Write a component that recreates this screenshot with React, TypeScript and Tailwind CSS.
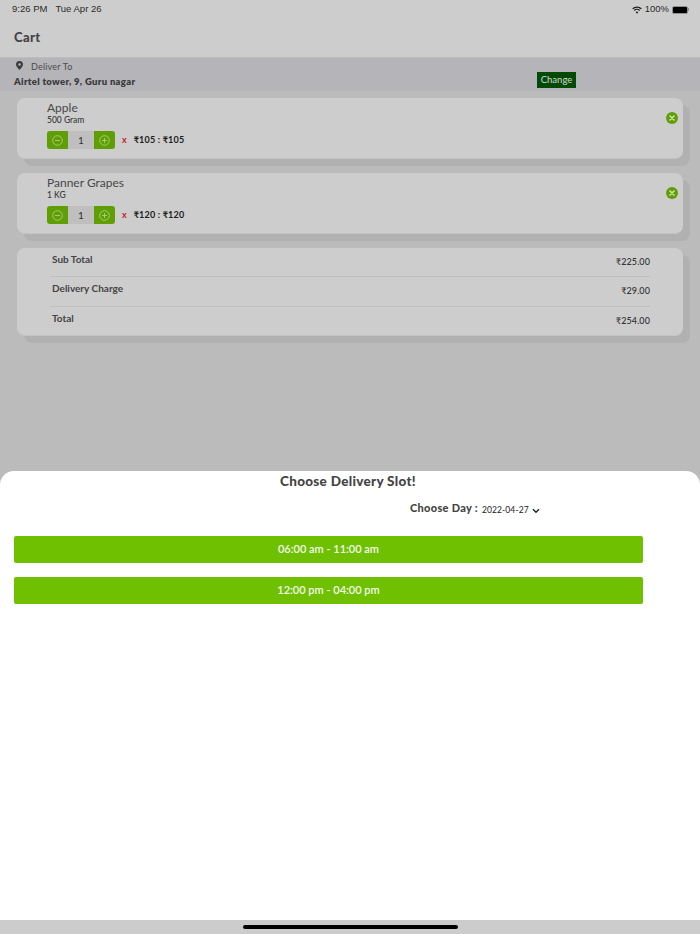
import React from 'react'

const cartItems = [
  { name: 'Apple', unit: '500 Gram', price: '₹105', total: '₹105' },
  { name: 'Panner Grapes', unit: '1 KG', price: '₹120', total: '₹120' },
]

const totals = [
  { label: 'Sub Total', value: '₹225.00' },
  { label: 'Delivery Charge', value: '₹29.00' },
  { label: 'Total', value: '₹254.00' },
]

const slots = ['06:00 am - 11:00 am', '12:00 pm - 04:00 pm']

const StepIcon = ({ plus }: { plus?: boolean }) => (
  <svg width="11" height="11" viewBox="0 0 11 11" fill="none" stroke="#a9cf80" strokeWidth="0.9">
    <circle cx="5.5" cy="5.5" r="4.8" />
    <path d={plus ? 'M3 5.5h5M5.5 3v5' : 'M3 5.5h5'} />
  </svg>
)

const RemoveIcon = () => (
  <svg width="12" height="12" viewBox="0 0 12 12" className="shrink-0">
    <circle cx="6" cy="6" r="6" fill="#5f9f05" />
    <path d="M4 4l4 4M8 4l-4 4" stroke="#d5e6bf" strokeWidth="1.5" strokeLinecap="round" />
  </svg>
)

const StatusBar = () => (
  <div className="flex h-[17px] items-center justify-between pl-3 pr-[11px] pt-0.5 text-[9.5px] text-[#2b2b2b] font-['Liberation_Sans',sans-serif]">
    <div className="flex gap-2">
      <span>9:26 PM</span>
      <span>Tue Apr 26</span>
    </div>
    <div className="flex items-center gap-[3px]">
      <svg width="10" height="8" viewBox="0 0 10 8" fill="none" stroke="#222" strokeWidth="1.2">
        <path d="M0.6 2.8a6.4 6.4 0 0 1 8.8 0M2.2 4.5a4 4 0 0 1 5.6 0" />
        <path d="M5 7.8L3.6 6.1a2 2 0 0 1 2.8 0z" fill="#222" stroke="none" />
      </svg>
      <span>100%</span>
      <div className="flex items-center">
        <div className="h-[8px] w-[16px] rounded-[2px] border border-[#8f8f8f] bg-black" />
        <div className="h-[3px] w-px bg-[#8f8f8f]" />
      </div>
    </div>
  </div>
)

const CartCard = ({ item }: { item: (typeof cartItems)[number] }) => (
  <div className="flex h-[61px] items-start justify-between rounded-lg border-b border-[#c4c4c4] bg-[#cdcdcd] pl-[30px] pr-[5px] shadow-[7px_7px_0_#b1b1b1]">
    <div>
      <div className="mt-[3px] text-[12px] leading-[14px] text-[#484848]">{item.name}</div>
      <div className="text-[8.5px] leading-[11px] font-medium text-[#3a3a3a]">{item.unit}</div>
      <div className="mt-[5px] flex items-center">
        <div className="flex h-[18px] w-[68px] items-center overflow-hidden rounded-[3px] bg-[#bfbfbf] text-[10px] text-[#333]">
          <div className="flex h-full w-[21px] items-center justify-center bg-[#5f9f05]">
            <StepIcon />
          </div>
          <div className="flex-1 text-center">1</div>
          <div className="flex h-full w-[21px] items-center justify-center bg-[#5f9f05]">
            <StepIcon plus />
          </div>
        </div>
        <span className="ml-[7px] text-[9px] font-bold text-[#c81e1e]">x</span>
        <span className="ml-[7px] text-[9px] font-bold tracking-[0.2px] text-[#1c1c1c]">
          {item.price} : {item.total}
        </span>
      </div>
    </div>
    <div className="mt-[14px]">
      <RemoveIcon />
    </div>
  </div>
)

export default function App() {
  return (
    <div className="flex h-[934px] w-[700px] flex-col overflow-hidden bg-[#bbbbbb] font-['Lato',sans-serif]">
      <header className="h-[58px] border-b border-[#bcbcbc] bg-[#cdcdcd]">
        <StatusBar />
        <h1 className="mt-3 pl-[14px] text-[13px] font-black leading-4 tracking-[0.4px] text-[#444]">Cart</h1>
      </header>

      <div className="flex h-[33px] justify-between bg-[#b5b4b9] pl-[14px] pr-[124px]">
        <div>
          <div className="flex items-center pl-0.5 pt-0.5 text-[9px] leading-[13px] text-[#4c4c4c]">
            <svg width="7" height="9" viewBox="0 0 7 9" fill="#3c3c3c" className="mb-0.5">
              <path fillRule="evenodd" d="M3.5 0a3.5 3.5 0 0 1 3.5 3.5C7 5.6 3.5 9 3.5 9S0 5.6 0 3.5A3.5 3.5 0 0 1 3.5 0zm0 2.2a1.3 1.3 0 1 0 0 2.6 1.3 1.3 0 0 0 0-2.6z" />
            </svg>
            <span className="ml-2 tracking-[0.2px]">Deliver To</span>
          </div>
          <div className="mt-0.5 text-[9.5px] font-extrabold leading-[14px] tracking-[0.3px] text-[#3c3c3c]">
            Airtel tower, 9, Guru nagar
          </div>
        </div>
        <div className="mt-[14px] flex h-4 w-[39px] items-center justify-center bg-[#044a06] text-[9.5px] text-[#d0d8d0]">
          Change
        </div>
      </div>

      <main className="flex flex-1 flex-col gap-[14px] pl-[17px] pr-[17px] pt-[7px]">
        {cartItems.map(item => (
          <CartCard key={item.name} item={item} />
        ))}
        <div className="h-[88px] rounded-lg border-b border-[#c4c4c4] bg-[#cdcdcd] pl-[33px] pr-[33px] shadow-[7px_7px_0_#b1b1b1]">
          {totals.map((row, i) => (
            <div
              key={row.label}
              className={`flex h-[29.3px] justify-between pl-0.5 text-[#444] ${i < 2 ? 'border-b border-[#bfbfbf]' : ''}`}
            >
              <span className="mt-[3px] text-[10px] font-bold leading-4">{row.label}</span>
              <span className="mt-[6px] text-[9px] font-medium leading-4 tracking-[0.1px] text-[#333]">{row.value}</span>
            </div>
          ))}
        </div>
      </main>

      <section className="h-[449px] rounded-t-[14px] bg-white">
        <h2 className="mt-0.5 pr-1 text-center text-[13.5px] font-black leading-4 tracking-[0.3px] text-[#444]">
          Choose Delivery Slot!
        </h2>
        <div className="mt-[10px] flex items-center pl-[410px]">
          <span className="text-[11px] font-black tracking-[0.3px] leading-[14px] text-[#444]">Choose Day :</span>
          <span className="ml-[4px] mt-[4px] text-[8.5px] leading-[14px] tracking-[0.1px] text-[#222]">2022-04-27</span>
          <svg width="8" height="6" viewBox="0 0 8 6" fill="none" stroke="#222" strokeWidth="1.4" className="ml-[3px] mt-[5px]">
            <path d="M1 1.2l3 3 3-3" />
          </svg>
        </div>
        <div className="mt-[19px] flex w-[629px] flex-col gap-[14px] ml-[14px]">
          {slots.map(slot => (
            <div
              key={slot}
              className="flex h-[27px] items-center justify-center rounded-[2px] bg-[#6fc100] text-[11px] font-semibold text-[#f4f8ee]"
            >
              {slot}
            </div>
          ))}
        </div>
      </section>

      <footer className="flex h-[14px] justify-center bg-[#cccccc] pt-[5px]">
        <div className="h-1 w-[215px] rounded-full bg-black" />
      </footer>
    </div>
  )
}
